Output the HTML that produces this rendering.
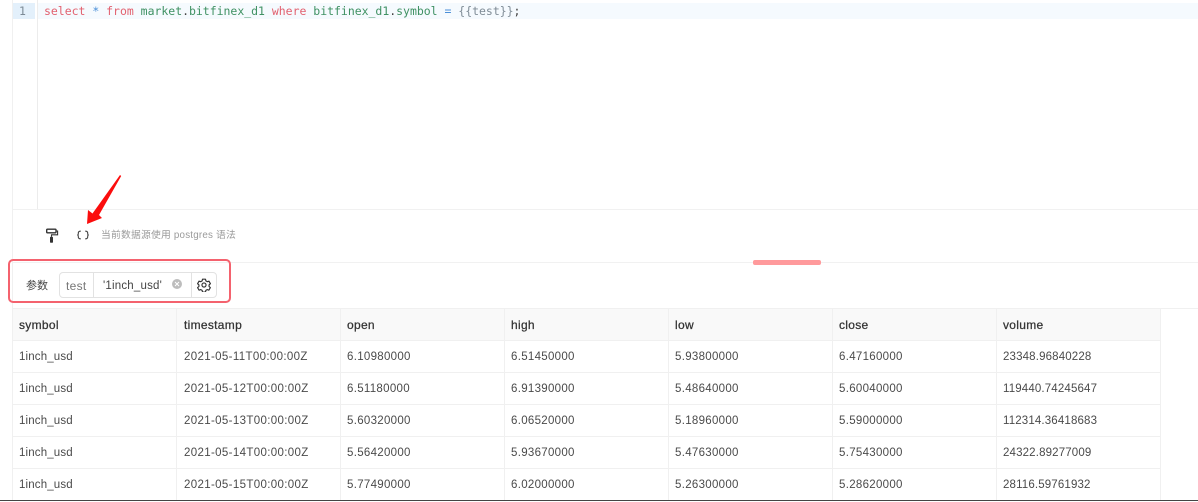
<!DOCTYPE html>
<html><head><meta charset="utf-8">
<style>
html,body{margin:0;padding:0;background:#fff}
body{position:relative;width:1198px;height:501px;overflow:hidden;font-family:"Liberation Sans","Noto Sans CJK SC",sans-serif;color:#3c3c3c}
.a{position:absolute}
.t{position:absolute;white-space:nowrap;font-size:11.5px;line-height:16px}
.code{font-family:"DejaVu Sans Mono","Liberation Mono",monospace;font-size:11.5px;line-height:16px;white-space:pre;letter-spacing:-.02px}
.r{color:#e2616f}.g{color:#3f9163}.b{color:#4a8fd8}.k{color:#7f8c96}.d{color:#444}
.cell{position:absolute;box-sizing:border-box;border-right:1px solid #f0f0f0;border-bottom:1px solid #f0f0f0;width:164px;height:32px;padding-left:6px;font-size:11.5px;line-height:33px;color:#4a4a4a;white-space:nowrap;letter-spacing:.15px}
.ts{letter-spacing:.35px;padding-left:7px}
.n{letter-spacing:.3px}
.h{background:#f9f9f9;font-size:12px;letter-spacing:.3px;color:#333;-webkit-text-stroke:.25px #333}
</style></head><body>
<div class="a" style="left:12px;top:0;width:1px;height:501px;background:#f0f0f0"></div>
<div class="a" style="left:37px;top:0;width:1px;height:209px;background:#ececec"></div>
<div class="a" style="left:38px;top:3px;width:1160px;height:16px;background:#f5fafe"></div>
<div class="a" style="left:13px;top:3px;width:22px;height:16px;background:#e3f0fb"></div>
<div class="t code" style="left:19px;top:3px;color:#7c8a96">1</div>
<div class="t code" style="left:44px;top:3px"><span class="r">select</span> <span class="b">*</span> <span class="r">from</span> <span class="g">market</span><span class="d">.</span><span class="g">bitfinex_d1</span> <span class="r">where</span> <span class="g">bitfinex_d1</span><span class="d">.</span><span class="g">symbol</span> <span class="b">=</span> <span class="k">{{test}}</span><span class="d">;</span></div>

<div class="a" style="left:13px;top:209px;width:1185px;height:1px;background:#f1f1f1"></div>
<div class="a" style="left:13px;top:262px;width:1185px;height:1px;background:#f1f1f1"></div>
<div class="a" style="left:753px;top:260px;width:68px;height:5px;border-radius:2px;background:#ff9a9c"></div>

<svg class="a" style="left:44px;top:226px" width="17" height="18" viewBox="0 0 17 18" fill="none" stroke="#333">
<rect x="2.700" y="3.200" width="9.300" height="3.600" rx=".8" stroke-width="1.400"/>
<path d="M12 5h1.600v3.800H7.500v2" stroke-width="1.100"/>
<rect x="6" y="10.800" width="3" height="6" rx=".8" fill="#333" stroke="none"/>
</svg>
<svg class="a" style="left:76px;top:228px" width="15" height="14" viewBox="0 0 15 14" fill="none" stroke="#444" stroke-width="1.100">
<path d="M4.800 3.200H4Q2.400 3.400 2.300 5V6Q2.200 7 1.200 7Q2.200 7 2.300 8V9Q2.400 10.600 4 10.800H4.800"/>
<path d="M9.200 3.200H10Q11.600 3.400 11.700 5V6Q11.800 7 12.800 7Q11.800 7 11.700 8V9Q11.600 10.600 10 10.800H9.200"/>
</svg>
<svg class="a" style="left:84px;top:174px" width="40" height="54" viewBox="0 0 40 54">
<path d="M37.200 2L15 41L18 44L3 50L4 36L8.500 39.500L36 1Z" fill="#fb0d0d"/>
</svg>
<div class="t" style="left:101px;top:228px;font-size:9.800px;color:#9a9a9a;letter-spacing:.2px">当前数据源使用 postgres 语法</div>

<div class="a" style="left:8px;top:259px;width:223px;height:44px;box-sizing:border-box;border:2px solid #f4626e;border-radius:5px"></div>
<div class="t" style="left:26px;top:278px;font-size:11px;color:#444">参数</div>
<div class="a" style="left:59px;top:272px;width:158px;height:26px;box-sizing:border-box;border:1px solid #e2e2e2;border-radius:4px"></div>
<div class="a" style="left:93px;top:272px;width:1px;height:26px;background:#e2e2e2"></div>
<div class="a" style="left:191px;top:272px;width:1px;height:26px;background:#e2e2e2"></div>
<div class="t" style="left:66px;top:278px;color:#777;font-size:12px;letter-spacing:.3px">test</div>
<div class="t" style="left:103px;top:278px;color:#444;font-size:11.500px;letter-spacing:.2px">'1inch_usd'</div>
<svg class="a" style="left:171px;top:278px" width="12" height="12" viewBox="0 0 12 12">
<circle cx="6" cy="6" r="5" fill="#bdbdbd"/><path d="M4 4l4 4M8 4l-4 4" stroke="#fff" stroke-width="1"/>
</svg>
<svg class="a" style="left:197px;top:278px" width="14" height="14" viewBox="0 0 24 24" fill="none" stroke="#333" stroke-width="2" stroke-linejoin="round">
<path d="M9.500 2.500h5l.7 3 2.300 1.300 3-.9 2.500 4.300-2.300 2.100v2.600l2.200 2.100-2.500 4.300-3-.9-2.200 1.300-.7 3h-5l-.7-3-2.300-1.300-3 .9-2.500-4.300 2.300-2.100v-2.600l-2.300-2.100 2.500-4.300 3 .9 2.300-1.300z" transform="translate(0 -.5)"/>
<circle cx="12" cy="12" r="3.500"/>
</svg>

<div class="a" style="left:13px;top:308px;width:1185px;height:1px;background:#f0f0f0"></div>

<div class="cell h" style="left:13px;top:309px">symbol</div>
<div class="cell h" style="left:177px;top:309px;padding-left:7px">timestamp</div>
<div class="cell h" style="left:341px;top:309px">open</div>
<div class="cell h" style="left:505px;top:309px">high</div>
<div class="cell h" style="left:669px;top:309px">low</div>
<div class="cell h" style="left:833px;top:309px">close</div>
<div class="cell h" style="left:997px;top:309px">volume</div>

<div class="cell" style="left:13px;top:341px">1inch_usd</div>
<div class="cell ts" style="left:177px;top:341px">2021-05-11T00:00:00Z</div>
<div class="cell n" style="left:341px;top:341px">6.10980000</div>
<div class="cell n" style="left:505px;top:341px">6.51450000</div>
<div class="cell n" style="left:669px;top:341px">5.93800000</div>
<div class="cell n" style="left:833px;top:341px">6.47160000</div>
<div class="cell" style="left:997px;top:341px">23348.96840228</div>

<div class="cell" style="left:13px;top:373px">1inch_usd</div>
<div class="cell ts" style="left:177px;top:373px">2021-05-12T00:00:00Z</div>
<div class="cell n" style="left:341px;top:373px">6.51180000</div>
<div class="cell n" style="left:505px;top:373px">6.91390000</div>
<div class="cell n" style="left:669px;top:373px">5.48640000</div>
<div class="cell n" style="left:833px;top:373px">5.60040000</div>
<div class="cell" style="left:997px;top:373px">119440.74245647</div>

<div class="cell" style="left:13px;top:405px">1inch_usd</div>
<div class="cell ts" style="left:177px;top:405px">2021-05-13T00:00:00Z</div>
<div class="cell n" style="left:341px;top:405px">5.60320000</div>
<div class="cell n" style="left:505px;top:405px">6.06520000</div>
<div class="cell n" style="left:669px;top:405px">5.18960000</div>
<div class="cell n" style="left:833px;top:405px">5.59000000</div>
<div class="cell" style="left:997px;top:405px">112314.36418683</div>

<div class="cell" style="left:13px;top:437px">1inch_usd</div>
<div class="cell ts" style="left:177px;top:437px">2021-05-14T00:00:00Z</div>
<div class="cell n" style="left:341px;top:437px">5.56420000</div>
<div class="cell n" style="left:505px;top:437px">5.93670000</div>
<div class="cell n" style="left:669px;top:437px">5.47630000</div>
<div class="cell n" style="left:833px;top:437px">5.75430000</div>
<div class="cell" style="left:997px;top:437px">24322.89277009</div>

<div class="cell" style="left:13px;top:469px">1inch_usd</div>
<div class="cell ts" style="left:177px;top:469px">2021-05-15T00:00:00Z</div>
<div class="cell n" style="left:341px;top:469px">5.77490000</div>
<div class="cell n" style="left:505px;top:469px">6.02000000</div>
<div class="cell n" style="left:669px;top:469px">5.26300000</div>
<div class="cell n" style="left:833px;top:469px">5.28620000</div>
<div class="cell" style="left:997px;top:469px">28116.59761932</div>

<div class="a" style="left:0;top:500px;width:1198px;height:1px;background:#444"></div>
</body></html>
